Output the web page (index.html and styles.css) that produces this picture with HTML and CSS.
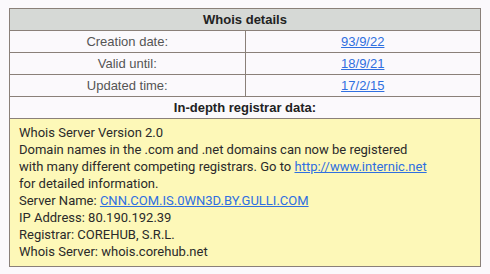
FILE: index.html
```html
<!DOCTYPE html>
<html lang="en">
<head>
  <meta charset="UTF-8">
  <title>Whois details</title>
  <link rel="stylesheet" href="styles.css">
</head>
<body>

<table class="whois">
  <tr><th colspan="2">Whois details</th></tr>
  <tr>
    <td class="label">Creation date:</td>
    <td class="value"><a href="#">93/9/22</a></td>
  </tr>
  <tr>
    <td class="label">Valid until:</td>
    <td class="value"><a href="#">18/9/21</a></td>
  </tr>
  <tr>
    <td class="label">Updated time:</td>
    <td class="value"><a href="#">17/2/15</a></td>
  </tr>
  <tr><th colspan="2" class="sub">In-depth registrar data:</th></tr>
  <tr>
    <td colspan="2" class="raw">
      Whois Server Version 2.0<br>
      Domain names in the .com and .net domains can now be registered<br>
      with many different competing registrars. Go to <a href="#">http://www.internic.net</a><br>
      for detailed information.<br>
      Server Name: <a href="#">CNN.COM.IS.0WN3D.BY.GULLI.COM</a><br>
      IP Address: 80.190.192.39<br>
      Registrar: COREHUB, S.R.L.<br>
      Whois Server: whois.corehub.net
    </td>
  </tr>
</table>

</body>
</html>
```

FILE: styles.css
```css
* { box-sizing: border-box; }
body {
  margin: 8px 9px;
  background: #fbf9fc;
  font-family: "Liberation Sans", Arial, sans-serif;
}
.whois {
  width: 472px;
  border-collapse: collapse;
  border: 1px solid #6b5e50;
  box-shadow: 1px 1px 0 #c9c3bb;
}
.whois th, .whois td {
  border: 1px solid #8a8079;
  padding: 0;
  height: 22px;
  font-size: 13px;
}
.whois th {
  background: #d6d9d6;
  color: #222;
  font-weight: bold;
}
.whois th.sub {
  background: #fbf9fc;
}
.label, .value {
  width: 50%;
  text-align: center;
  color: #555;
  background: #fbf9fc;
}
a { color: #2f6fe0; }
.raw {
  background: #fdf8b8;
  color: #2a2a2a;
  font-family: Roboto, "Noto Sans", sans-serif;
  font-size: 11.2px;
  line-height: 17px;
  white-space: nowrap;
  padding: 5px 9px 6px !important;
  height: auto !important;
}
```
